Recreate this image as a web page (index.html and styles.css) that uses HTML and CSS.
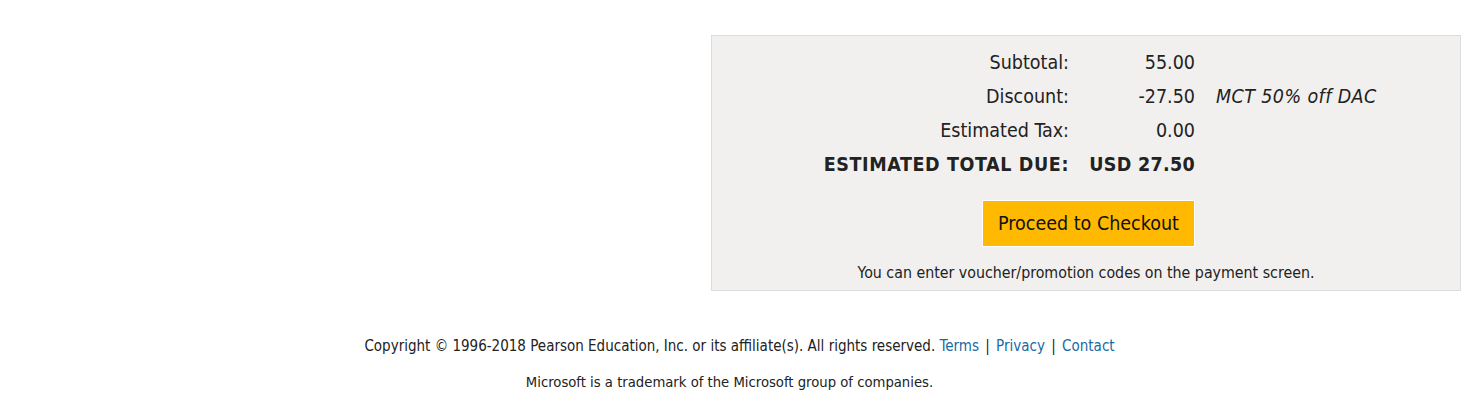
FILE: index.html
```html
<!DOCTYPE html>
<html lang="en">
<head>
<meta charset="utf-8">
<title>Cart</title>
<link rel="stylesheet" href="styles.css">
</head>
<body>
<div class="page">
  <section class="summary">
    <div class="totals">
      <div class="label">Subtotal:</div>
      <div class="value">55.00</div>
      <div class="note"></div>

      <div class="label">Discount:</div>
      <div class="value">-27.50</div>
      <div class="note">MCT 50% off DAC</div>

      <div class="label">Estimated Tax:</div>
      <div class="value">0.00</div>
      <div class="note"></div>

      <div class="label strong">ESTIMATED TOTAL DUE:</div>
      <div class="value strong">USD 27.50</div>
      <div class="note"></div>

      <div class="action">
        <button class="checkout" type="button">Proceed to Checkout</button>
      </div>
    </div>
    <p class="voucher">You can enter voucher/promotion codes on the payment screen.</p>
  </section>

  <footer class="footer">
    <p class="copy">Copyright © 1996-2018 Pearson Education, Inc. or its affiliate(s). All rights reserved. <a href="#">Terms</a> <span class="sep">|</span> <a href="#">Privacy</a> <span class="sep">|</span> <a href="#">Contact</a></p>
    <p class="trademark">Microsoft is a trademark of the Microsoft group of companies.</p>
  </footer>
</div>
</body>
</html>
```

FILE: styles.css
```css
html, body {
  margin: 0;
  padding: 0;
  background: #ffffff;
}

body {
  font-family: "DejaVu Sans Condensed", "DejaVu Sans", sans-serif;
  color: #222222;
}

.page {
  padding-top: 35px;
}

.summary {
  box-sizing: border-box;
  width: 750px;
  margin-left: auto;
  margin-right: 6px;
  background: #f1f0ee;
  border: 1px solid #dddcda;
  padding: 9px 0 7px;
}

.totals {
  display: grid;
  grid-template-columns: 357px 126px 1fr;
  grid-template-rows: repeat(4, 34px) auto;
  align-items: center;
  font-size: 19.5px;
}

.label {
  text-align: right;
}

.value {
  text-align: right;
}

.note {
  padding-left: 21px;
  font-style: italic;
  letter-spacing: 0.4px;
}

.strong {
  font-weight: bold;
  letter-spacing: 0.6px;
}

.value.strong {
  letter-spacing: 0.3px;
}

.action {
  grid-column: 1 / 3;
  display: flex;
  justify-content: flex-end;
  margin-top: 19px;
}

.checkout {
  box-sizing: border-box;
  width: 213px;
  height: 47px;
  background: #ffb900;
  border: 1px solid #ffffff;
  color: #111111;
  font-family: inherit;
  font-size: 19.5px;
  padding: 0;
  cursor: pointer;
}

.voucher {
  margin: 16px 0 0;
  text-align: center;
  font-size: 15.8px;
  line-height: 20px;
}

.footer {
  text-align: center;
  font-size: 15px;
  padding-top: 45px;
}

.footer p {
  margin: 0;
  line-height: 20px;
}

.footer .copy {
  padding-left: 12px;
}

.footer .trademark {
  margin-top: 16px;
  font-size: 14.7px;
  padding-right: 8px;
}

.footer a {
  color: #1a6aa5;
  text-decoration: none;
}

.sep {
  padding: 0 2px;
}
```
